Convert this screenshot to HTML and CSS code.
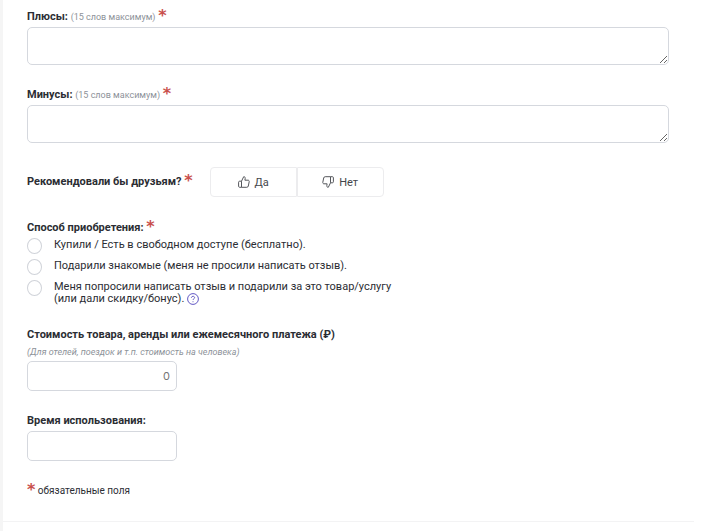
FILE: index.html
```html
<!DOCTYPE html>
<html lang="ru">
<head>
  <meta charset="UTF-8">
  <title>Написать отзыв</title>
  <link rel="stylesheet" href="styles.css">
</head>
<body>
  <form class="review-form">
    <div class="field">
      <label class="label" for="plus">Плюсы: <small>(15 слов максимум)</small> <span class="req">*</span></label>
      <textarea id="plus"></textarea>
    </div>

    <div class="field">
      <label class="label" for="minus">Минусы: <small>(15 слов максимум)</small> <span class="req">*</span></label>
      <textarea id="minus"></textarea>
    </div>

    <div class="recommend">
      <div class="label">Рекомендовали бы друзьям? <span class="req">*</span></div>
      <div class="vote">
        <button type="button">
          <svg class="thumb" viewBox="0 0 12 12"><path d="M3.5 5.2 5.7.7C6.8.7 7.4 1.4 7.2 2.5L6.9 4.2H10c.9 0 1.4.7 1.2 1.5l-.9 4.3c-.1.8-.7 1.3-1.5 1.3H3.5zM3.5 5.2H1.6c-.6 0-1 .4-1 1v4.1c0 .6.4 1 1 1h1.9"/></svg>
          Да
        </button>
        <button type="button">
          <svg class="thumb" viewBox="0 0 12 12"><path d="M8.5 6.8 6.3 11.3C5.2 11.3 4.6 10.6 4.8 9.5L5.1 7.8H2C1.1 7.8.6 7.1.8 6.3L1.7 2C1.8 1.2 2.4.7 3.2.7h5.3zM8.5 6.8h1.9c.6 0 1-.4 1-1V1.7c0-.6-.4-1-1-1H8.5"/></svg>
          Нет
        </button>
      </div>
    </div>

    <fieldset class="source">
      <legend class="label">Способ приобретения: <span class="req">*</span></legend>
      <label class="option"><input type="radio" name="source"> <span>Купили / Есть в свободном доступе (бесплатно).</span></label>
      <label class="option"><input type="radio" name="source"> <span>Подарили знакомые (меня не просили написать отзыв).</span></label>
      <label class="option"><input type="radio" name="source">
        <span>Меня попросили написать отзыв и подарили за это товар/услугу<br>(или дали скидку/бонус).
          <svg class="help" viewBox="0 0 12 12"><circle cx="6" cy="6" r="5.4"/><path d="M4.4 4.8c0-2 3.2-2 3.2-.1C7.6 5.8 6 5.8 6 7M6 8.3v.9"/></svg></span>
      </label>
    </fieldset>

    <div class="field">
      <label class="label" for="price">Стоимость товара, аренды или ежемесячного платежа (₽)</label>
      <em class="hint">(Для отелей, поездок и т.п. стоимость на человека)</em>
      <input class="text-input price" type="text" id="price" placeholder="0">
    </div>

    <div class="field">
      <label class="label" for="usage">Время использования:</label>
      <input class="text-input" type="text" id="usage">
    </div>

    <p class="note"><span class="req">*</span> обязательные поля</p>
  </form>
</body>
</html>
```

FILE: styles.css
```css
* {
  box-sizing: border-box;
}

body {
  margin: 0;
  border-left: 3px solid #f5f5f5;
  min-height: 100vh;
  background: #fff;
  color: #2b2d33;
  font-family: Roboto, "Liberation Sans", sans-serif;
  font-size: 11px;
}

.review-form {
  margin-right: 20px;
  padding: 8px 25px 21px 24px;
  border-bottom: 1px solid #f3f3f4;
}

.field {
  display: flex;
  flex-direction: column;
  align-items: flex-start;
  gap: 1px;
  margin-bottom: 21px;
}

.label {
  padding: 0;
  font-weight: 700;
  line-height: 18px;
}

.label small {
  color: #8d9299;
  font-size: 9px;
  font-weight: 400;
  line-height: 0;
}

.req {
  color: #c9504c;
  font-family: "DejaVu Sans", sans-serif;
  font-size: 16px;
  font-weight: 700;
  line-height: 0;
  vertical-align: -1px;
}

textarea,
.text-input {
  margin: 0;
  border: 1px solid #d5d8de;
  border-radius: 5px;
  background: #fff;
  color: inherit;
  font: inherit;
}

textarea {
  display: block;
  width: 100%;
  height: 38px;
  padding: 4px 6px;
  resize: vertical;
}

.text-input {
  width: 150px;
  height: 30px;
  padding: 0 6px;
}

.price {
  font-family: Inter, sans-serif;
  text-align: right;
}

.price::placeholder {
  color: #757575;
}

.hint {
  color: #8d9299;
  font-size: 9px;
  line-height: 15px;
}

.recommend {
  display: flex;
  align-items: center;
  gap: 17px;
  margin: 24px 0 22px;
}

.vote {
  display: flex;
}

.vote button {
  display: flex;
  align-items: center;
  justify-content: center;
  gap: 5px;
  width: 87px;
  height: 30px;
  padding: 0;
  border: 1px solid #ececee;
  border-radius: 4px 0 0 4px;
  background: #fff;
  color: #44464b;
  font: inherit;
}

.vote button + button {
  border-radius: 0 4px 4px 0;
}

.thumb {
  width: 12px;
  height: 12px;
  fill: none;
  stroke: #55575c;
  stroke-linejoin: round;
}

.source {
  margin: 0 0 21px;
  padding: 0;
  border: 0;
}

.source .label {
  margin-bottom: 1px;
}

.option {
  display: flex;
  align-items: flex-start;
  gap: 12px;
  margin-bottom: 5px;
  line-height: 12px;
}

.option:last-child {
  margin-bottom: 0;
}

.option span {
  padding-top: 1px;
}

.option input {
  appearance: none;
  flex: none;
  width: 15px;
  height: 16px;
  margin: 0;
  border: 1px solid #d0d3d9;
  border-radius: 50%;
}

.help {
  width: 12px;
  height: 12px;
  vertical-align: -3px;
  fill: none;
  stroke: #6258c4;
}

.note {
  margin: 0;
  font-size: 10px;
  line-height: 18px;
}
```
